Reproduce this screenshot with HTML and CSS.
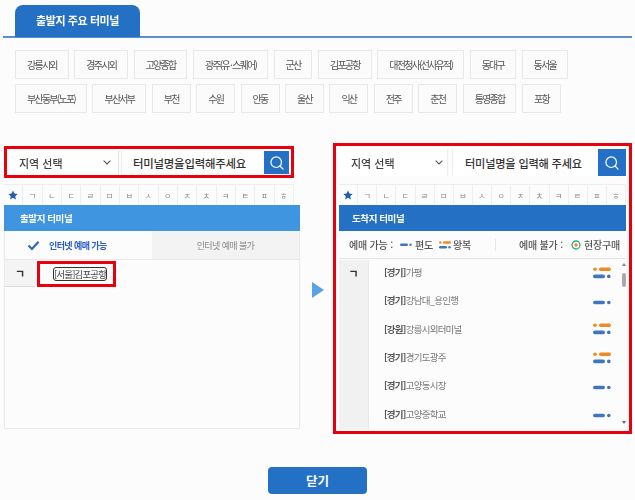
FILE: index.html
```html
<!DOCTYPE html>
<html lang="ko">
<head>
<meta charset="utf-8">
<title>출발지 주요 터미널</title>
<link rel="stylesheet" href="styles.css">
</head>
<body>
<svg class="defs" width="0" height="0" aria-hidden="true">
  <symbol id="oneway" viewBox="0 0 18 5"><rect x="0" y="0.7" width="12" height="3.6" rx="1.8" fill="#3f76bd"/><circle cx="15.8" cy="2.5" r="1.8" fill="#3f76bd"/></symbol>
  <symbol id="round" viewBox="0 0 18 12"><circle cx="2" cy="2.2" r="1.8" fill="#f08a24"/><rect x="6" y="0.4" width="12" height="3.6" rx="1.8" fill="#f08a24"/><rect x="0" y="7.6" width="12" height="3.6" rx="1.8" fill="#3f76bd"/><circle cx="15.8" cy="9.4" r="1.8" fill="#3f76bd"/></symbol>
  <symbol id="search" viewBox="0 0 20 20"><circle cx="9" cy="9" r="6.6" fill="none" stroke="#fff" stroke-width="1.5"/><path d="M13.8 13.8L17.6 17.6" stroke="#fff" stroke-width="1.6" stroke-linecap="round"/></symbol>
  <symbol id="chev" viewBox="0 0 8 5"><path d="M0.6 0.6L4 4L7.4 0.6" fill="none" stroke="#555" stroke-width="1.1"/></symbol>
  <symbol id="star" viewBox="0 0 20 20"><path d="M10 1l2.8 6 6.5.8-4.8 4.5 1.3 6.5L10 15.5 4.2 18.8l1.3-6.5L.7 7.8 7.2 7z" fill="#1f5fae"/></symbol>
</svg>
<main class="page">
  <div class="tab-bar"><div class="tab">출발지 주요 터미널</div></div>
  <div class="chips">
    <a class="chip">강릉시외</a><a class="chip">경주시외</a><a class="chip">고양종합</a><a class="chip">광주(유 · 스퀘어)</a><a class="chip">군산</a><a class="chip">김포공항</a><a class="chip">대전청사(선사유적)</a><a class="chip">동대구</a><a class="chip">동서울</a>
    <a class="chip">부산동부(노포)</a><a class="chip">부산서부</a><a class="chip">부천</a><a class="chip">수원</a><a class="chip">안동</a><a class="chip">울산</a><a class="chip">익산</a><a class="chip">전주</a><a class="chip">춘천</a><a class="chip">통영종합</a><a class="chip">포항</a>
  </div>
  <div class="panels">
    <section class="col-left">
      <div class="search search-left">
        <div class="region"><span>지역 선택</span><svg class="chev"><use href="#chev"/></svg></div>
        <div class="term">터미널명을입력해주세요</div>
        <button class="go"><svg class="mag"><use href="#search"/></svg></button>
      </div>
      <div class="alpha alpha-left">
        <span class="cell"><svg class="star"><use href="#star"/></svg></span><span class="cell">ㄱ</span><span class="cell">ㄴ</span><span class="cell">ㄷ</span><span class="cell">ㄹ</span><span class="cell">ㅁ</span><span class="cell">ㅂ</span><span class="cell">ㅅ</span><span class="cell">ㅇ</span><span class="cell">ㅈ</span><span class="cell">ㅊ</span><span class="cell">ㅋ</span><span class="cell">ㅌ</span><span class="cell">ㅍ</span><span class="cell">ㅎ</span>
      </div>
      <div class="box-left">
        <div class="head head-light">출발지 터미널</div>
        <div class="seg">
          <div class="seg-on"><svg class="check" viewBox="0 0 14 12"><path d="M1.5 6L5.3 9.8L12.5 1.8" fill="none" stroke="#2e68b4" stroke-width="2.4"/></svg><span>인터넷 예매 가능</span></div>
          <div class="seg-off">인터넷 예매 불가</div>
        </div>
        <div class="left-row">
          <div class="cons cons-left">ㄱ</div>
          <div class="hit"><span class="focus">[서울]김포공항</span></div>
        </div>
      </div>
    </section>
    <div class="arrow"></div>
    <section class="col-right">
      <div class="search search-right">
        <div class="region region-r"><span>지역 선택</span><svg class="chev chev-r"><use href="#chev"/></svg></div>
        <div class="term term-r">터미널명을 입력해 주세요</div>
        <button class="go go-r"><svg class="mag"><use href="#search"/></svg></button>
      </div>
      <div class="alpha alpha-right">
        <span class="cell"><svg class="star"><use href="#star"/></svg></span><span class="cell">ㄱ</span><span class="cell">ㄴ</span><span class="cell">ㄷ</span><span class="cell">ㄹ</span><span class="cell">ㅁ</span><span class="cell">ㅂ</span><span class="cell">ㅅ</span><span class="cell">ㅇ</span><span class="cell">ㅈ</span><span class="cell">ㅊ</span><span class="cell">ㅋ</span><span class="cell">ㅌ</span><span class="cell">ㅍ</span><span class="cell">ㅎ</span>
      </div>
      <div class="head head-dark">도착지 터미널</div>
      <div class="legend">
        <span class="lg-label">예매 가능 :</span>
        <svg class="lg-ico"><use href="#oneway"/></svg><span>편도</span>
        <svg class="lg-ico lg-round"><use href="#round"/></svg><span>왕복</span>
        <i class="lg-sep"></i>
        <span class="lg-label">예매 불가 :</span>
        <svg class="lg-target" viewBox="0 0 10 10"><circle cx="5" cy="5" r="4" fill="none" stroke="#35a78f" stroke-width="1.3"/><circle cx="5" cy="5" r="1.7" fill="#f08a24"/></svg><span>현장구매</span>
      </div>
      <div class="list">
        <div class="cons cons-right">ㄱ</div>
        <ul class="items">
          <li><span><b>[경기]</b>가평</span><svg class="ic-round"><use href="#round"/></svg></li>
          <li><span><b>[경기]</b>강남대_용인행</span><svg class="ic-one"><use href="#oneway"/></svg></li>
          <li><span><b>[강원]</b>강릉시외터미널</span><svg class="ic-round"><use href="#round"/></svg></li>
          <li><span><b>[경기]</b>경기도광주</span><svg class="ic-round"><use href="#round"/></svg></li>
          <li><span><b>[경기]</b>고양동시장</span><svg class="ic-one"><use href="#oneway"/></svg></li>
          <li><span><b>[경기]</b>고양중학교</span><svg class="ic-one"><use href="#oneway"/></svg></li>
        </ul>
        <div class="scroll"><i class="up"></i><i class="thumb"></i><i class="down"></i></div>
      </div>
    </section>
  </div>
  <div class="foot"><button class="close">닫기</button></div>
</main>
</body>
</html>
```
FILE: styles.css
```css
* { box-sizing: border-box; }
html, body { margin: 0; height: 100%; overflow: hidden; }
body { background: #fcfcfc; font-family: "Noto Sans CJK KR", "Noto Sans", sans-serif; color: #444; }
.defs { position: absolute; }
.page { width: 635px; height: 500px; padding: 5px 3px 0; filter: blur(0.45px); }

.tab-bar { height: 33px; border-bottom: 2px solid #5b8fd0; padding-left: 12px; }
.tab { width: 125px; height: 32px; background: #2370c4; border-radius: 8px 8px 0 0; color: #fff; font-size: 11px; font-weight: 700; letter-spacing: -0.4px; display: flex; align-items: center; justify-content: center; padding-bottom: 2px; }

.chips { display: flex; flex-wrap: wrap; gap: 5px 5.5px; margin: 12px 0 0 12px; width: 570px; }
.chip { height: 29px; padding: 0 11px; border: 1px solid #e8e8e8; background: #fbfbfb; font-size: 10px; letter-spacing: -1.75px; color: #555; display: flex; align-items: center; white-space: nowrap; }

.panels { display: flex; align-items: flex-start; margin-top: 30px; }
.col-left { width: 297px; margin: 3px 0 0 1px; }
.arrow { width: 0; height: 0; margin: 139px 9px 0 12px; border-left: 12px solid #5aa2e2; border-top: 8px solid transparent; border-bottom: 8px solid transparent; }
.col-right { width: 299px; height: 291px; border: 3px solid #e8000d; padding: 3px 3px 0; }

.search { display: flex; align-items: stretch; }
.search-left { width: 290px; height: 32px; border: 3px solid #e8000d; padding: 2px 2px 1px; }
.search-right { height: 27px; margin-left: 0; }
.region { width: 110px; background: #fff; font-size: 11px; font-weight: 500; color: #444; display: flex; align-items: center; justify-content: space-between; padding: 0 6px 0 10px; border-right: 1px solid #e4e4e4; }
.region-r { width: 109px; padding-left: 12px; border-right: 1px solid #eee; }
.chev { width: 8px; height: 5px; margin-right: 1px; }
.chev-r { margin-right: -2px; }
.term { flex: 1; margin-left: 2px; background: #fff; font-size: 11.4px; font-weight: 500; color: #333; letter-spacing: -0.2px; display: flex; align-items: center; padding-left: 11px; white-space: nowrap; border-left: 1px solid #eee; }
.term-r { margin-left: 4px; padding-left: 12px; font-size: 11.2px; letter-spacing: -0.2px; }
.go { width: 25px; border: 0; padding: 0; background: #2370c4; display: flex; align-items: center; justify-content: center; }
.go-r { width: 28px; }
.mag { width: 16px; height: 16px; }

.alpha { display: flex; height: 21px; margin-top: 6px; border-top: 1px solid #eee; }
.alpha-left { width: 290px; }
.alpha-right { margin-top: 8px; width: 287px; }
.cell { flex: 1; border-right: 1px solid #eee; font-size: 8px; color: #888; display: flex; align-items: center; justify-content: center; }
.star { width: 10px; height: 10px; }

.box-left { width: 296px; height: 224px; border: 1px solid #e8e8e8; border-top: 0; }
.head { height: 26px; color: #fff; font-size: 9.5px; font-weight: 700; letter-spacing: -0.4px; display: flex; align-items: center; padding-left: 16px; padding-bottom: 1px; }
.head-light { background: #3f95e0; margin: 0 -1px; }
.head-dark { background: #2370c4; width: 287px; padding-left: 13px; }

.seg { display: flex; height: 29px; border-bottom: 1px solid #e8e8e8; font-size: 9px; letter-spacing: -0.6px; }
.seg-on { width: 147px; display: flex; align-items: center; gap: 9px; padding-left: 22px; color: #2b5cc0; font-weight: 700; }
.check { width: 13px; height: 11px; }
.seg-off { flex: 1; background: #f3f3f3; color: #888; display: flex; align-items: center; justify-content: center; }

.left-row { display: flex; height: 28px; }
.cons { background: #f4f4f4; font-weight: 700; font-size: 11px; color: #333; display: flex; justify-content: center; }
.cons-left { width: 30px; height: 27px; align-items: center; border-bottom: 1px solid #ddd; }
.hit { width: 79px; height: 26px; margin: 1px 0 0 2px; border: 3px solid #e8000d; display: flex; align-items: center; padding-left: 13px; }
.focus { border: 1.5px solid #333; border-radius: 3px; font-size: 9.5px; letter-spacing: -0.85px; color: #444; line-height: 12px; white-space: nowrap; }

.legend { height: 28px; width: 287px; border-bottom: 1px solid #e4e4e4; display: flex; align-items: center; padding-left: 10px; font-size: 10px; font-weight: 500; letter-spacing: -0.2px; color: #555; white-space: nowrap; }
.lg-ico { width: 12px; height: 3.5px; margin: 0 3px 0 7px; }
.lg-round { height: 8px; margin-left: 6px; margin-right: 2px; }
.lg-sep { width: 1px; height: 12px; background: #e4e4e4; margin: 0 23px 0 24px; }
.lg-target { width: 10px; height: 10px; margin: 0 3px 0 8px; }

.list { display: flex; width: 287px; height: 169px; margin-top: 1px; }
.cons-right { width: 30px; background: #f1f1f1; padding-top: 5px; height: 100%; border-right: 1px solid #e9e9e9; }
.items { flex: 1; list-style: none; margin: -2px 0 0; padding: 0; }
.items li { height: 28.3px; display: flex; align-items: center; justify-content: space-between; padding: 0 10px 0 15px; font-size: 9.5px; letter-spacing: -0.75px; color: #777; }
.items b { font-weight: 700; color: #555; }
.ic-round { width: 18px; height: 12px; margin-top: 1px; }
.ic-one { width: 18px; height: 5px; margin-top: 4px; }
.scroll { width: 5px; display: flex; flex-direction: column; align-items: center; margin-right: 0; }
.up { width: 0; height: 0; margin-top: 3px; border: 2px solid transparent; border-bottom: 3px solid #888; border-top: 0; }
.thumb { width: 4px; height: 14px; margin-top: 7px; background: #aaa; border-radius: 2px; }
.down { width: 0; height: 0; margin-top: auto; margin-bottom: 5px; border: 2px solid transparent; border-top: 3px solid #666; border-bottom: 0; }

.foot { display: flex; justify-content: center; margin-top: 33px; }
.close { width: 99px; height: 27px; padding: 0; border: 0; border-radius: 4px; background: #2370c4; color: #fff; font: 700 12.5px "Noto Sans CJK KR", sans-serif; }
```
